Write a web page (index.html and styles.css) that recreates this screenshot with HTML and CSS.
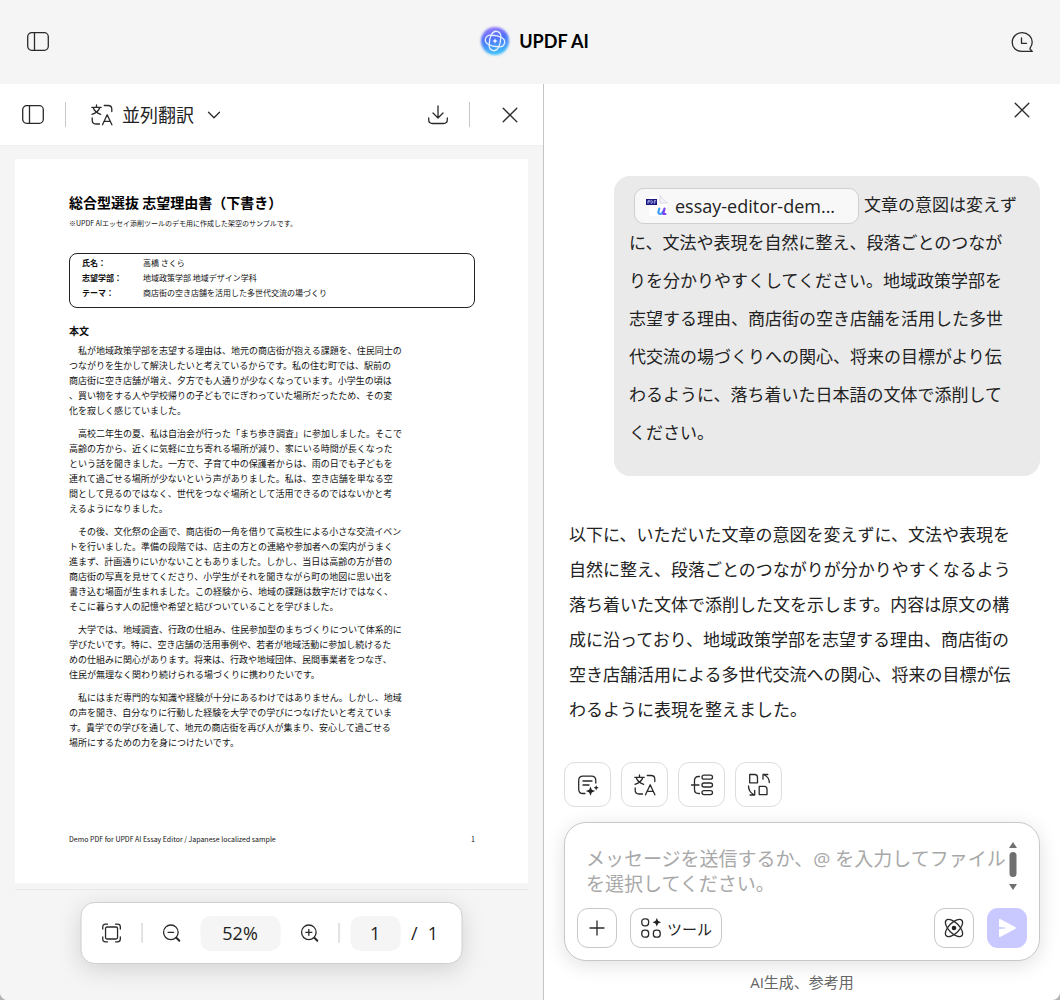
FILE: index.html
```html
<!DOCTYPE html>
<html lang="ja">
<head>
    <meta charset="utf-8">
    <meta name="viewport" content="width=device-width, initial-scale=1">
    <title>UPDF AI</title>
    <link rel="stylesheet" href="styles.css">
</head>
<body>
    <header class="topbar">
        <button class="icon-btn" type="button" aria-label="サイドバー">
            <svg width="24" height="22" viewBox="0 0 24 22"><rect x="1.7" y="1.7" width="20.6" height="17.6" rx="4"/><path d="M8.5 2v17"/></svg>
        </button>
        <div class="brand">
            <svg class="brand-logo" width="32" height="32" viewBox="0 0 32 32">
                <defs>
                    <linearGradient id="logoFill" x1="0.3" y1="0" x2="0.5" y2="1">
                        <stop offset="0" stop-color="#9a7bfa"/>
                        <stop offset="0.4" stop-color="#4f6ff8"/>
                        <stop offset="1" stop-color="#3fc4fb"/>
                    </linearGradient>
                    <filter id="logoSoft"><feGaussianBlur stdDeviation="0.8"/></filter>
                </defs>
                <circle class="logo-bg" cx="16" cy="16" r="14"/>
                <g class="logo-lines" transform="rotate(14 16 16)">
                    <path d="M11.2 20.500C9.500 13 11 6.200 15.500 6.200c3 0 4.800 2 5.300 4.800"/>
                    <path d="M11.500 11.200C19 9.500 25.800 11 25.800 15.500c0 3-2 4.800-4.800 5.300"/>
                    <path d="M20.800 11.500C22.500 19 21 25.800 16.500 25.800c-3 0-4.800-2-5.300-4.800"/>
                    <path d="M20.500 20.800C13 22.500 6.200 21 6.200 16.500c0-3 2-4.800 4.800-5.300"/>
                </g>
                <path class="logo-star" d="M16 13.200l.8 2 2 .8-2 .8-.8 2-.8-2-2-.8 2-.8z"/>
            </svg>
            <span>UPDF AI</span>
        </div>
        <button class="icon-btn" type="button" aria-label="履歴">
            <svg width="24" height="22" viewBox="0 0 24 22"><path d="M22.300 20.400H12C6 20.400 2.200 16.500 2.200 11.200 2.200 5.800 6.500 1.700 12.200 1.700s10 4.300 10 9.300c0 2.700-.8 4.300-2 5.800-.5.700-.3 1.100.2 1.700z"/><path d="M11.500 7v5.300h5"/></svg>
        </button>
    </header>

    <main class="workspace">
        <section class="viewer">
            <div class="viewer-bar">
                <button class="icon-btn" type="button" aria-label="サムネイル">
                    <svg width="24" height="22" viewBox="0 0 24 22"><rect x="1.700" y="1.700" width="20.600" height="17.600" rx="4"/><path d="M8.500 2v17"/></svg>
                </button>
                <span class="sep"></span>
                <button class="mode-btn" type="button" aria-haspopup="menu">
                    <svg width="24" height="24" viewBox="0 0 24 24"><use href="#icon-translate"/></svg>
                    並列翻訳
                    <svg class="chevron" width="14" height="10" viewBox="0 0 14 10"><path d="M1.500 2.200L7 7.700l5.500-5.500"/></svg>
                </button>
                <button class="icon-btn push" type="button" aria-label="ダウンロード">
                    <svg width="22" height="22" viewBox="0 0 22 22"><path d="M11 2v11.500M6 9l5 5 5-5M1.700 14v1.500c0 2.500 1.300 4 3.800 4h11c2.500 0 3.800-1.500 3.800-4V14"/></svg>
                </button>
                <span class="sep"></span>
                <button class="icon-btn close" type="button" aria-label="閉じる">
                    <svg width="16" height="16" viewBox="0 0 16 16"><path d="M1.200 1.200l13.600 13.600M14.800 1.200L1.200 14.800"/></svg>
                </button>
            </div>

            <div class="canvas">
                <article class="sheet">
                    <h1>総合型選抜 志望理由書（下書き）</h1>
                    <p class="note">※UPDF AIエッセイ添削ツールのデモ用に作成した架空のサンプルです。</p>
                    <dl class="info">
                        <dt>氏名：</dt><dd>高橋 さくら</dd>
                        <dt>志望学部：</dt><dd>地域政策学部 地域デザイン学科</dd>
                        <dt>テーマ：</dt><dd>商店街の空き店舗を活用した多世代交流の場づくり</dd>
                    </dl>
                    <h2>本文</h2>
                    <div class="essay">
                        <p>　私が地域政策学部を志望する理由は、地元の商店街が抱える課題を、住民同士の<br>つながりを生かして解決したいと考えているからです。私の住む町では、駅前の<br>商店街に空き店舗が増え、夕方でも人通りが少なくなっています。小学生の頃は<br>、買い物をする人や学校帰りの子どもでにぎわっていた場所だったため、その変<br>化を寂しく感じていました。</p>
                        <p>　高校二年生の夏、私は自治会が行った「まち歩き調査」に参加しました。そこで<br>高齢の方から、近くに気軽に立ち寄れる場所が減り、家にいる時間が長くなった<br>という話を聞きました。一方で、子育て中の保護者からは、雨の日でも子どもを<br>連れて過ごせる場所が少ないという声がありました。私は、空き店舗を単なる空<br>間として見るのではなく、世代をつなぐ場所として活用できるのではないかと考<br>えるようになりました。</p>
                        <p>　その後、文化祭の企画で、商店街の一角を借りて高校生による小さな交流イベン<br>トを行いました。準備の段階では、店主の方との連絡や参加者への案内がうまく<br>進まず、計画通りにいかないこともありました。しかし、当日は高齢の方が昔の<br>商店街の写真を見せてくださり、小学生がそれを聞きながら町の地図に思い出を<br>書き込む場面が生まれました。この経験から、地域の課題は数字だけではなく、<br>そこに暮らす人の記憶や希望と結びついていることを学びました。</p>
                        <p>　大学では、地域調査、行政の仕組み、住民参加型のまちづくりについて体系的に<br>学びたいです。特に、空き店舗の活用事例や、若者が地域活動に参加し続けるた<br>めの仕組みに関心があります。将来は、行政や地域団体、民間事業者をつなぎ、<br>住民が無理なく関わり続けられる場づくりに携わりたいです。</p>
                        <p>　私にはまだ専門的な知識や経験が十分にあるわけではありません。しかし、地域<br>の声を聞き、自分なりに行動した経験を大学での学びにつなげたいと考えていま<br>す。貴学での学びを通して、地元の商店街を再び人が集まり、安心して過ごせる<br>場所にするための力を身につけたいです。</p>
                    </div>
                    <footer class="sheet-foot">
                        <span>Demo PDF for UPDF AI Essay Editor / Japanese localized sample</span>
                        <span>1</span>
                    </footer>
                </article>
            </div>

            <div class="zoombar">
                <button class="icon-btn" type="button" aria-label="ページに合わせる">
                    <svg width="20" height="20" viewBox="0 0 20 20"><rect x="4" y="4" width="12" height="12" rx="1.500"/><path d="M1.200 6V4c0-2 .8-2.800 2.800-2.800h2M14 1.200h2c2 0 2.800.8 2.800 2.800v2M18.800 14v2c0 2-.8 2.800-2.800 2.800h-2M6 18.800H4c-2 0-2.800-.8-2.800-2.800v-2"/></svg>
                </button>
                <span class="tick"></span>
                <button class="icon-btn" type="button" aria-label="縮小">
                    <svg width="18" height="18" viewBox="0 0 18 18"><circle cx="8.300" cy="8.300" r="7.300"/><path d="M5.500 8.300h5.600"/><path class="handle" d="M13.800 13.800l3 3"/></svg>
                </button>
                <button class="zoom-value" type="button">52%</button>
                <button class="icon-btn" type="button" aria-label="拡大">
                    <svg width="18" height="18" viewBox="0 0 18 18"><circle cx="8.300" cy="8.300" r="7.300"/><path d="M5.300 8.300h6M8.300 5.300v6"/><path class="handle" d="M13.800 13.800l3 3"/></svg>
                </button>
                <span class="tick"></span>
                <input class="page-input" type="text" value="1" aria-label="ページ">
                <span class="page-total"><span>/</span><span>1</span></span>
            </div>
        </section>

        <section class="chat">
            <div class="chat-head">
                <button class="icon-btn" type="button" aria-label="閉じる">
                    <svg width="16" height="16" viewBox="0 0 16 16"><path d="M1.200 1.200l13.600 13.600M14.800 1.200L1.200 14.800"/></svg>
                </button>
            </div>

            <div class="bubble"><a class="file-chip" href="#"><svg class="file-icon" width="22" height="22" viewBox="0 0 22 22">
                    <path fill="#fff" stroke="none" d="M3 1h12l6 6v14H3z"/>
                    <path fill="#f3f3f8" stroke="#cfcfe0" stroke-width=".8" d="M14 1v7h7z"/>
                    <rect x="0" y="4" width="11" height="6" fill="#17177f" stroke="none"/>
                    <path stroke="#b9b9ee" stroke-width=".8" d="M2 8.500v-3h1.500v1.500H2M5 5.500v3h.8l.7-.7V6.200l-.7-.7zM8.300 8.500v-3h1.500M8.300 7h1.200"/>
                    <path stroke="#3f9bf5" stroke-width="2.200" d="M13.300 13.500l-.8 3c-.4 1.700.5 2.500 1.700 2.500 1.500 0 2.300-1 2.800-2.500"/>
                    <path stroke="#7a3ff0" stroke-width="2.200" d="M18.500 13.500l-1.300 5.500h2.300"/>
                </svg>essay-editor-dem...</a>文章の意図は変えずに、文法や表現を自然に整え、段落ごとのつながりを分かりやすくしてください。地域政策学部を志望する理由、商店街の空き店舗を活用した多世代交流の場づくりへの関心、将来の目標がより伝わるように、落ち着いた日本語の文体で添削してください。</div>

            <p class="answer">以下に、いただいた文章の意図を変えずに、文法や表現を自然に整え、段落ごとのつながりが分かりやすくなるよう落ち着いた文体で添削した文を示します。内容は原文の構成に沿っており、地域政策学部を志望する理由、商店街の空き店舗活用による多世代交流への関心、将来の目標が伝わるように表現を整えました。</p>

            <div class="actions">
                <button type="button" aria-label="要約">
                    <svg width="24" height="24" viewBox="0 0 24 24"><path d="M9 20.500H7c-3 0-4.300-1.300-4.300-4.300V7.500c0-3 1.300-4.300 4.300-4.300h8.500c3 0 4.300 1.300 4.300 4.300V10M7 8h9M7 12h6"/><path class="solid" d="M14.500 13.500l1.300 3.300 3.300 1.300-3.300 1.300-1.300 3.300-1.300-3.300-3.300-1.300 3.300-1.300zM20.200 12.200l.8 1.800 1.800.8-1.800.8-.8 1.800-.8-1.800-1.800-.8 1.800-.8z"/></svg>
                </button>
                <button type="button" aria-label="翻訳">
                    <svg width="24" height="24" viewBox="0 0 24 24">
                        <g id="icon-translate">
                            <path d="M1.800 4.300h9.400M6.500 1.800v2.500M3.200 4.500c.8 3 3.500 5.500 7.500 6.800M9.800 4.500c-.8 3-3.500 5.500-7.800 6.800M14.300 2.500H18c2.500 0 3.800 1.200 3.800 3.800V8.500M2.200 15v2c0 2.700 1.200 4 3.800 4h3.500M12.500 21.800L17.200 11.800l4.700 10M14.300 18.300h5.800"/>
                        </g>
                    </svg>
                </button>
                <button type="button" aria-label="マインドマップ">
                    <svg width="24" height="24" viewBox="0 0 24 24"><rect x="12" y="2.200" width="10.500" height="4" rx="2"/><rect x="12" y="10" width="10.500" height="4" rx="2"/><rect x="12" y="17.600" width="10.500" height="4" rx="2"/><path d="M1.500 12H9M9.500 3.500H8.500C6 3.500 4.500 5 4.500 7.500v9c0 2.500 1.500 4 4 4h1"/></svg>
                </button>
                <button type="button" aria-label="変換">
                    <svg width="24" height="24" viewBox="0 0 24 24"><path d="M2.700 1.500h5c1.800 0 2.800 1.300 2.800 3v5.300H2.700zM12.200 13.300h5c1.800 0 2.800 1.300 2.800 3v5.300h-7.800zM22.300 9.500c0-3.500-1.700-6-5-7.500M16 6.200V1.500h4.800M1.500 13c0 3.500 1.700 6.500 5 8.500M3 22h4.700v-4.500"/></svg>
                </button>
            </div>

            <form class="composer">
                <div class="composer-text">
                    <textarea rows="2" aria-label="メッセージ" placeholder="メッセージを送信するか、@ を入力してファイル&#10;を選択してください。"></textarea>
                    <svg class="scroll-thumb" width="10" height="50" viewBox="0 0 10 50"><path d="M1 7l4-6 4 6z"/><rect x="1.500" y="11" width="7" height="25" rx="3.500"/><path d="M1 43l4 6 4-6z"/></svg>
                </div>
                <div class="composer-tools">
                    <button class="tool" type="button" aria-label="追加">
                        <svg width="16" height="16" viewBox="0 0 16 16"><path d="M8 1v14M1 8h14"/></svg>
                    </button>
                    <button class="tool wide" type="button">
                        <svg width="22" height="22" viewBox="0 0 22 22"><rect x="1.800" y="1.800" width="6.800" height="7" rx="2.800"/><rect x="1.800" y="13.200" width="6.800" height="7" rx="2.800"/><rect x="13.400" y="13.200" width="6.800" height="7" rx="2.800"/><path class="solid" d="M16.800 1l1.300 3 3 1.300-3 1.300-1.300 3-1.300-3-3-1.300 3-1.300z"/></svg>
                        ツール
                    </button>
                    <button class="tool push" type="button" aria-label="推論">
                        <svg class="atom" width="22" height="22" viewBox="0 0 22 22"><ellipse cx="11" cy="11" rx="11" ry="5.200" transform="rotate(45 11 11)"/><ellipse cx="11" cy="11" rx="11" ry="5.200" transform="rotate(-45 11 11)"/><circle class="solid" cx="11" cy="11" r="2.300"/></svg>
                    </button>
                    <button class="send" type="submit" aria-label="送信">
                        <svg width="20" height="20" viewBox="0 0 20 20"><path d="M2 1.800c0-.8.500-1 1.200-.7l15 8c.8.500.8 1.300 0 1.800l-15 8c-.7.300-1.200 0-1.200-.7V11l6.500-.5v-1L2 9z"/></svg>
                    </button>
                </div>
            </form>
            <p class="disclaimer">AI生成、参考用</p>
        </section>
    </main>
</body>
</html>
```

FILE: styles.css
```css
* {
    box-sizing: border-box;
}

html {
    background: #b4b4b4;
}

body {
    margin: 0;
    min-height: 100vh;
    display: flex;
    flex-direction: column;
    background: #fff;
    border-radius: 0 0 8px 8px;
    overflow: hidden;
    color: #222;
    font-family: "Open Sans", "Noto Sans CJK JP", sans-serif;
    font-size: 17px;
}

h1, h2, p, dl, dd {
    margin: 0;
}

button, input, textarea {
    font: inherit;
    color: inherit;
}

button {
    padding: 0;
    border: 0;
    background: none;
    cursor: pointer;
}

svg {
    display: block;
    fill: none;
    stroke: #2a2a2a;
    stroke-width: 1.3;
    stroke-linecap: round;
    stroke-linejoin: round;
    flex: none;
}

.solid {
    fill: #222;
    stroke: none;
}

.push {
    margin-left: auto;
}

/* top bar */
.topbar {
    height: 84px;
    padding: 0 26px;
    display: flex;
    align-items: center;
    justify-content: space-between;
    background: #f5f5f5;
}

.brand {
    display: flex;
    align-items: center;
    gap: 8px;
    padding: 0 0 2px 8px;
    font-family: Lato, sans-serif;
    font-size: 18px;
    font-weight: 700;
    color: #000;
}

.logo-bg {
    fill: url(#logoFill);
    stroke: none;
    filter: url(#logoSoft);
}

.logo-lines {
    stroke: #e6f1ff;
    stroke-width: 1.3;
}

.logo-star {
    fill: #fff;
    stroke: none;
}

.workspace {
    flex: 1;
    display: grid;
    grid-template-columns: 544fr 516fr;
}

/* pdf viewer */
.viewer {
    position: relative;
    display: flex;
    flex-direction: column;
    background: #f5f5f5;
    border-right: 1px solid #c4c4c4;
}

.viewer-bar {
    height: 61px;
    padding: 0 25px 0 21px;
    display: flex;
    align-items: center;
    background: #fff;
}

.sep {
    width: 1px;
    height: 25px;
    margin-left: 20px;
    background: #c8c8c8;
}

.mode-btn {
    display: flex;
    align-items: center;
    gap: 8px;
    margin-left: 24px;
    font-size: 18px;
    line-height: 24px;
}

.chevron {
    margin-left: 5px;
}

.close {
    margin-left: 32px;
}

.canvas {
    flex: 1;
    padding: 13px 15px;
    border-top: 1px solid #f0f0f0;
}

.canvas::after {
    content: "";
    display: block;
    height: 1px;
    margin: 6px 0 0;
    background: #e8e8e8;
}

.sheet {
    height: 724px;
    padding: 29px 53px 36px 54px;
    display: flex;
    flex-direction: column;
    background: #fff;
    color: #111;
    font-family: "Noto Sans CJK JP", sans-serif;
    font-size: 9px;
    line-height: 15px;
    white-space: nowrap;
}

.sheet h1 {
    font-size: 14px;
    font-weight: 700;
    line-height: 28px;
    color: #000;
}

.note {
    font-size: 7px;
}

.info {
    display: grid;
    grid-template-columns: 61px 1fr;
    margin: 22px 0 15px;
    padding: 1px 12px 7px;
    border: 1px solid #222;
    border-radius: 8px;
    font-size: 8px;
}

.info dt {
    font-weight: 700;
}

.sheet h2 {
    margin-bottom: 5px;
    font-size: 10px;
    font-weight: 700;
}

.essay {
    display: flex;
    flex-direction: column;
    gap: 8px;
}

.sheet-foot {
    margin-top: auto;
    display: flex;
    justify-content: space-between;
    font-size: 7px;
}

.zoombar {
    position: absolute;
    left: 50%;
    bottom: 36px;
    transform: translateX(-50%);
    height: 62px;
    padding: 0 24px 0 20px;
    display: flex;
    align-items: center;
    gap: 20px;
    background: #fff;
    border: 1px solid #cfcfcf;
    border-radius: 14px;
    box-shadow: 0 6px 24px rgba(0, 0, 0, 0.14);
    font-size: 18px;
}

.tick {
    width: 1px;
    height: 20px;
    background: #c8c8c8;
}

.zoom-value, .page-input {
    width: 80px;
    height: 35px;
    border: 0;
    border-radius: 10px;
    background: #f5f5f5;
    text-align: center;
}

.page-input {
    width: 50px;
    margin-left: -9px;
}

.page-total {
    display: flex;
    gap: 10px;
    margin-left: -9px;
}

.handle {
    stroke-width: 2;
}

/* chat */
.chat {
    padding: 0 20px;
    display: flex;
    flex-direction: column;
}

.chat-head {
    height: 92px;
    padding: 18px 10px 0 0;
    display: flex;
    justify-content: flex-end;
    align-items: flex-start;
}

.bubble {
    margin-left: 50px;
    padding: 10px 22px 24px 15px;
    border-radius: 16px;
    background: #eaeaea;
    line-height: 38px;
}

.file-chip {
    display: inline-flex;
    align-items: center;
    vertical-align: middle;
    gap: 7px;
    width: 225px;
    height: 36px;
    margin: 0 5px;
    padding: 0 11px;
    border: 1px solid #cfcfcf;
    border-radius: 10px;
    background: #f8f8f8;
    color: inherit;
    font-size: 18px;
    line-height: 34px;
    text-decoration: none;
    white-space: nowrap;
}

.answer {
    margin: 41px 15px 0 5px;
    line-height: 35px;
}

.actions {
    display: flex;
    gap: 10px;
    margin-top: 35px;
}

.actions button {
    width: 47px;
    height: 45px;
    display: grid;
    place-items: center;
    border: 1px solid #dedede;
    border-radius: 11px;
}

.composer {
    margin-top: 15px;
    padding: 24px 12px 12px;
    border: 1px solid #c8c8c8;
    border-radius: 22px;
    background: #fff;
    box-shadow: 0 4px 20px rgba(0, 0, 0, 0.12);
}

.composer-text {
    display: flex;
    align-items: flex-start;
    justify-content: space-between;
    height: 50px;
    padding: 0 9px;
}

.composer textarea {
    flex: 1;
    min-width: 0;
    height: 50px;
    padding: 0;
    border: 0;
    outline: 0;
    resize: none;
    overflow: hidden;
    background: none;
    white-space: pre;
    font-size: 19px;
    line-height: 25px;
}

.composer textarea::placeholder {
    color: #a8a8a8;
}

.scroll-thumb {
    margin-top: -6px;
    fill: #707070;
    stroke: none;
}

.composer-tools {
    display: flex;
    gap: 13px;
    margin-top: 11px;
}

.tool, .send {
    width: 40px;
    height: 40px;
    display: flex;
    align-items: center;
    justify-content: center;
    border: 1px solid #c8c8c8;
    border-radius: 11px;
}

.wide {
    width: 92px;
    gap: 5px;
    font-size: 15px;
}

.push {
    margin-left: auto;
}

.send {
    border: 0;
    background: #c9c8ff;
}

.send svg {
    fill: #fff;
    stroke: none;
}

.disclaimer {
    margin-top: 9px;
    text-align: center;
    font-size: 15px;
    line-height: 24px;
    color: #666;
}
```
